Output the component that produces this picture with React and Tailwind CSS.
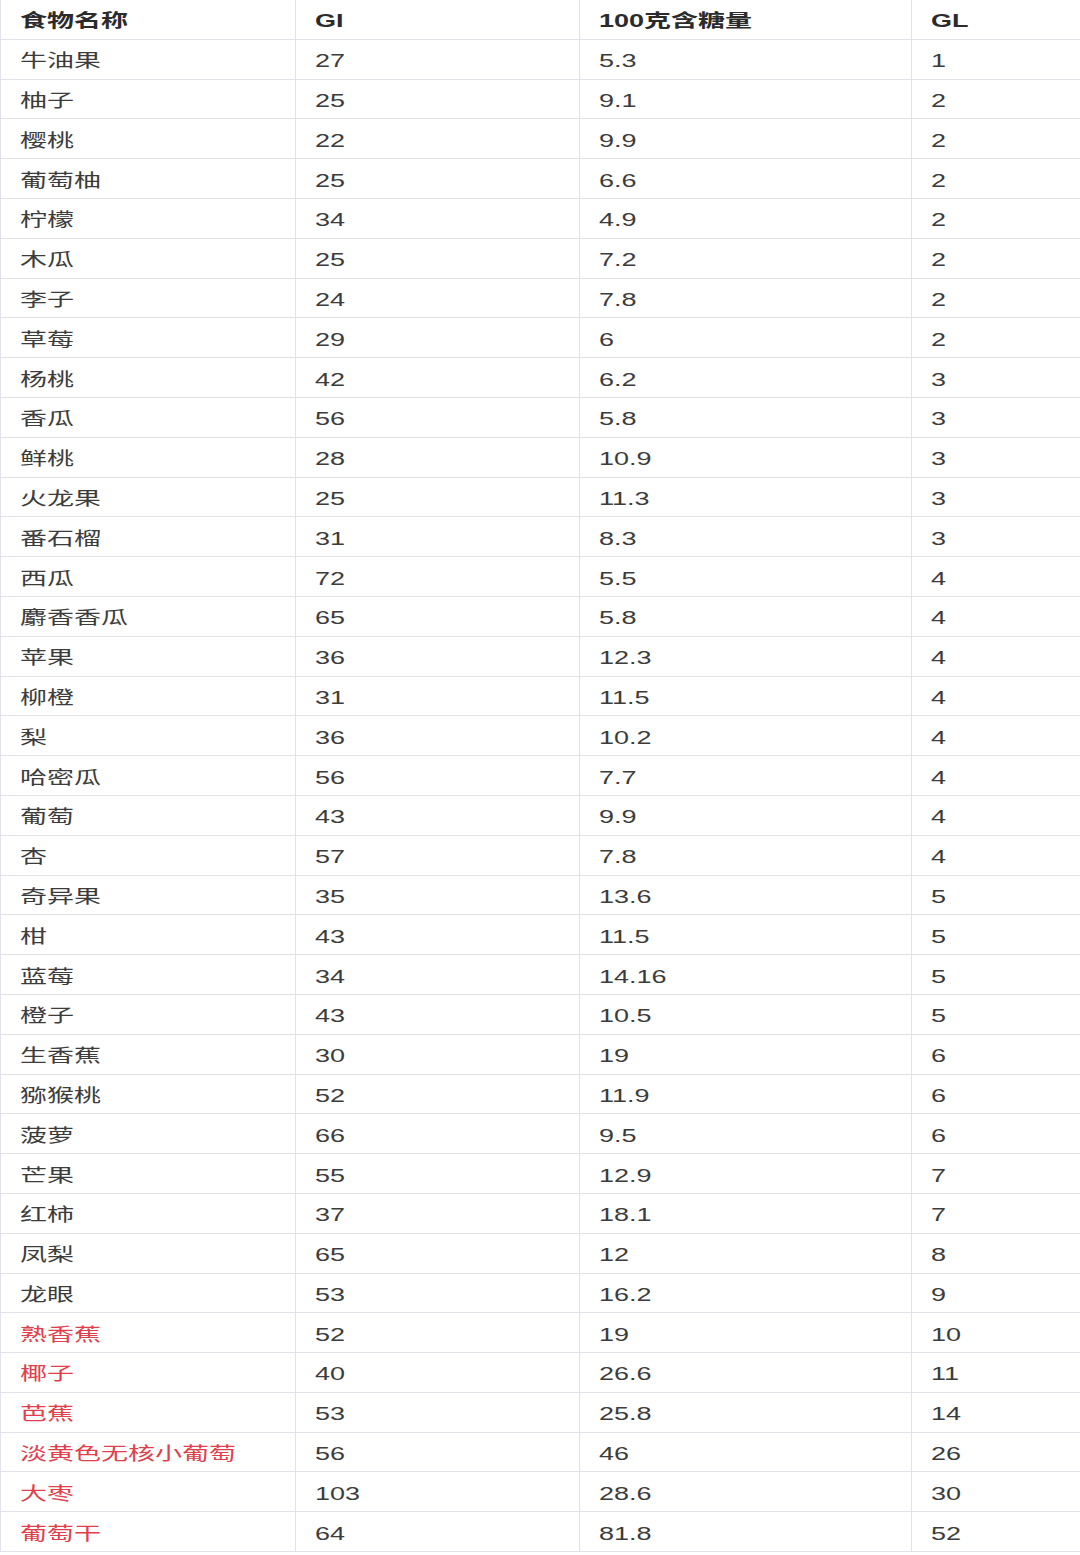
const ROWS = [
  ['牛油果', '27', '5.3', '1'],
  ['柚子', '25', '9.1', '2'],
  ['樱桃', '22', '9.9', '2'],
  ['葡萄柚', '25', '6.6', '2'],
  ['柠檬', '34', '4.9', '2'],
  ['木瓜', '25', '7.2', '2'],
  ['李子', '24', '7.8', '2'],
  ['草莓', '29', '6', '2'],
  ['杨桃', '42', '6.2', '3'],
  ['香瓜', '56', '5.8', '3'],
  ['鲜桃', '28', '10.9', '3'],
  ['火龙果', '25', '11.3', '3'],
  ['番石榴', '31', '8.3', '3'],
  ['西瓜', '72', '5.5', '4'],
  ['麝香香瓜', '65', '5.8', '4'],
  ['苹果', '36', '12.3', '4'],
  ['柳橙', '31', '11.5', '4'],
  ['梨', '36', '10.2', '4'],
  ['哈密瓜', '56', '7.7', '4'],
  ['葡萄', '43', '9.9', '4'],
  ['杏', '57', '7.8', '4'],
  ['奇异果', '35', '13.6', '5'],
  ['柑', '43', '11.5', '5'],
  ['蓝莓', '34', '14.16', '5'],
  ['橙子', '43', '10.5', '5'],
  ['生香蕉', '30', '19', '6'],
  ['猕猴桃', '52', '11.9', '6'],
  ['菠萝', '66', '9.5', '6'],
  ['芒果', '55', '12.9', '7'],
  ['红柿', '37', '18.1', '7'],
  ['凤梨', '65', '12', '8'],
  ['龙眼', '53', '16.2', '9'],
  ['熟香蕉', '52', '19', '10', true],
  ['椰子', '40', '26.6', '11', true],
  ['芭蕉', '53', '25.8', '14', true],
  ['淡黄色无核小葡萄', '56', '46', '26', true],
  ['大枣', '103', '28.6', '30', true],
  ['葡萄干', '64', '81.8', '52', true],
];

function Cell({ children, red, bold, last }) {
  return (
    <div className={`h-[39.8px] flex items-center pl-[19px] pt-[4px] border-b border-[#e1e1e9] ${last ? '' : 'border-r'} overflow-visible`}>
      <span className={`inline-block origin-left scale-x-150 whitespace-nowrap text-[18px] leading-none ${bold ? 'font-bold text-[#2b2b2b]' : 'text-[#3c3c3c]'} ${red ? 'text-[#e0404c]' : ''}`}>
        {children}
      </span>
    </div>
  );
}

export default function App() {
  return (
    <div className="w-[1080px] h-[1555px] bg-white font-['Liberation_Sans','Noto_Sans_CJK_SC',sans-serif]">
      <div className="grid grid-cols-[295px_284px_332px_169px] border-l border-[#e1e1e9]">
        <Cell bold>食物名称</Cell>
        <Cell bold>GI</Cell>
        <Cell bold>100克含糖量</Cell>
        <Cell bold last>GL</Cell>
        {ROWS.map((r, i) => (
          <div key={i} className="contents">
            <Cell red={r[4]}>{r[0]}</Cell>
            <Cell>{r[1]}</Cell>
            <Cell>{r[2]}</Cell>
            <Cell last>{r[3]}</Cell>
          </div>
        ))}
      </div>
    </div>
  );
}
